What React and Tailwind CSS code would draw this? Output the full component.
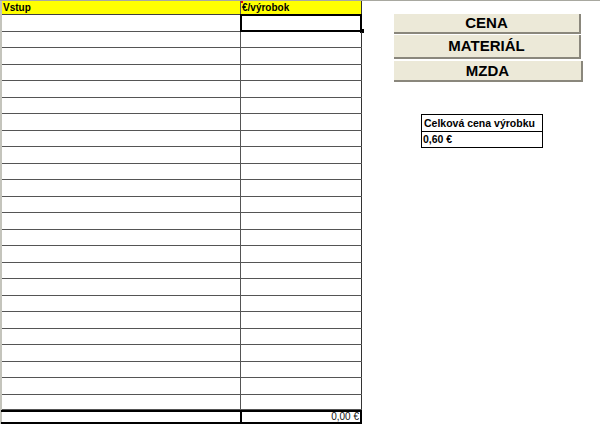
import React from 'react';

const rows = Array.from({ length: 24 }, (_, i) => (i === 23 ? 15 : i % 2 === 0 ? 17 : 16));

const font = { fontFamily: '"Liberation Sans", Arial, sans-serif' };

const App = () => {
  return (
    <div className="w-[600px] h-[431px] bg-white overflow-hidden border-t border-[#a8a8a0] text-black" style={font}>
      <div className="flex">
        {/* Tabulka */}
        <div className="w-[362px] border-l-2 border-[#c4c4bc]">
          <div className="flex h-[14px] bg-[#ffff00] border-b border-[#404040]">
            <div className="w-[239px] border-r border-[#555] text-[10px] font-bold leading-[13px] pl-[1px]">Vstup</div>
            <div className="relative w-[121px] border-r border-[#333] text-[10px] font-bold leading-[13px] pl-[1px]">
              <span className="absolute left-0 top-0 w-[2px] h-[2px] bg-red-600"></span>
              €/výrobok
            </div>
          </div>
          {rows.map((h, i) => (
            <div
              key={i}
              className={`flex border-b border-[#555] ${h === 17 ? 'h-[17px]' : h === 16 ? 'h-[16px]' : 'h-[15px]'}`}
            >
              <div className="w-[239px] border-r border-[#555]"></div>
              <div className="relative w-[121px] border-r border-[#333]">
                {i === 0 && (
                  <>
                    <div className="absolute -left-[1px] -top-[1px] w-[122px] h-[18px] border-2 border-black"></div>
                    <div className="absolute -right-[3px] top-[14px] w-[4px] h-[4px] bg-black"></div>
                  </>
                )}
              </div>
            </div>
          ))}
          <div className="flex h-[14px] border-y-2 border-black -ml-[1px]">
            <div className="w-[241px] border-r-2 border-black"></div>
            <div className="w-[120px] border-r-2 border-black text-[10px] leading-[10px] text-right pr-[1px] text-[#111]">0,00 €</div>
          </div>
        </div>

        {/* Tlačidlá a súhrn */}
        <div className="ml-[32px] pt-[13px]">
          <div className="flex flex-col gap-[1px]">
            <button className="w-[187px] h-[20px] bg-[#ece9d8] border-r-2 border-b-2 border-[#8a877c] text-[15px] font-bold leading-[18px] text-center">
              CENA
            </button>
            <button className="w-[187px] h-[24px] bg-[#ece9d8] border-r-2 border-b-2 border-[#8a877c] text-[15px] font-bold leading-[22px] text-center">
              MATERIÁL
            </button>
            <button className="mt-[1px] w-[189px] h-[21px] bg-[#ece9d8] border-r-2 border-b-2 border-[#8a877c] text-[15px] font-bold leading-[19px] text-center">
              MZDA
            </button>
          </div>

          <div className="ml-[27px] mt-[32px] w-[122px] border border-black text-[10.5px] font-bold">
            <div className="h-[17px] border-b border-black leading-[16px] pl-[2px]">Celková cena výrobku</div>
            <div className="h-[15px] leading-[14px] pl-[1px]">0,60 €</div>
          </div>
        </div>
      </div>
    </div>
  );
};

export default App;
